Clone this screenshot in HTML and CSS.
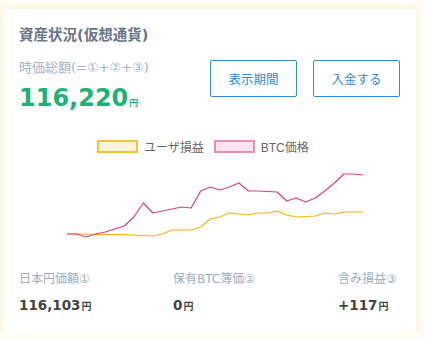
FILE: index.html
```html
<!DOCTYPE html>
<html lang="ja">
<head>
<meta charset="utf-8">
<link rel="stylesheet" href="styles.css">
</head>
<body>
<div class="card">
  <div class="header">
    <div class="summary">
      <div class="title">資産状況(仮想通貨)</div>
      <div class="label">時価総額(=①+②+③)</div>
      <div class="total">116,220<span class="yen">円</span></div>
    </div>
    <div class="actions">
      <button class="btn">表示期間</button>
      <button class="btn">入金する</button>
    </div>
  </div>
  <div class="legend">
    <span class="box box-yellow"></span><span class="legend-text">ユーザ損益</span>
    <span class="box box-pink"></span><span class="legend-text">BTC価格</span>
  </div>
  <svg class="chart" width="381" height="80" viewBox="0 0 381 80">
    <polyline fill="none" stroke="#f5b40f" stroke-width="1.2" stroke-linejoin="round"
      points="48,69 57.5,69 67.1,69 76.6,69.5 86.2,69.5 95.7,69.5 105.3,69.5 114.8,70 124.4,70.5 133.9,71 143.5,69 153,65 162.6,65 172.1,65 181.7,62 191.2,54 200.8,52 210.3,48 219.9,49 229.4,50 239,48 248.5,48 258.1,46 267.6,50 277.2,52 286.7,51.5 296.3,51 305.8,48 315.4,49 324.9,47 334.5,47 344,47"/>
    <polyline fill="none" stroke="#de3f79" stroke-width="1.2" stroke-linejoin="round"
      points="48,69 57.5,69 67.1,72 76.6,69 86.2,67 95.7,64 105.3,61 114.8,52 124.4,38 133.9,48 143.5,46 153,44 162.6,42 172.1,43 181.7,26 191.2,22 200.8,25 210.3,22 219.9,18 229.4,26 239,26 248.5,26.5 258.1,27 267.6,36 277.2,33 286.7,37 296.3,33 305.8,26 315.4,18 324.9,9 334.5,9 344,10"/>
  </svg>
  <div class="stats">
    <div class="stat">
      <div class="stat-label">日本円価額①</div>
      <div class="stat-value">116,103<span class="yen-s">円</span></div>
    </div>
    <div class="stat">
      <div class="stat-label">保有BTC簿価②</div>
      <div class="stat-value">0<span class="yen-s">円</span></div>
    </div>
    <div class="stat">
      <div class="stat-label">含み損益③</div>
      <div class="stat-value">+117<span class="yen-s">円</span></div>
    </div>
  </div>
</div>
</body>
</html>
```

FILE: styles.css
```css
html, body {
  margin: 0;
  background: #fffdf8;
}
body {
  padding: 9px 9px 0 3px;
  font-family: "DejaVu Sans", "Noto Sans CJK JP", sans-serif;
}
.card {
  width: 413px;
  height: 322px;
  box-sizing: border-box;
  background: #fff;
  border-radius: 4px;
  box-shadow: 0 0 6px 2px rgba(255, 228, 160, 0.45);
  padding: 16px 16px 0 16px;
}
.header {
  display: flex;
  justify-content: space-between;
}
.title {
  font-size: 14.5px;
  line-height: 20px;
  font-weight: bold;
  color: #6a7487;
}
.label {
  margin-top: 13px;
  font-size: 13px;
  line-height: 20px;
  color: #a6b2c4;
}
.total {
  margin-top: 5px;
  font-size: 24px;
  line-height: 30px;
  font-weight: bold;
  color: #1bb474;
}
.yen {
  font-family: "Noto Sans CJK JP", sans-serif;
  font-size: 9px;
  line-height: 10px;
  font-weight: bold;
  margin-left: 1px;
}
.actions {
  display: flex;
  gap: 16px;
  margin-top: 35px;
  align-self: flex-start;
}
.btn {
  width: 87px;
  height: 37px;
  background: #fff;
  border: 1px solid #2c8ce4;
  border-radius: 2px;
  color: #2c8ce4;
  font-family: "Noto Sans CJK JP", sans-serif;
  font-size: 12.5px;
  padding: 0;
}
.legend {
  display: flex;
  align-items: center;
  margin-top: 26px;
  padding-left: 78px;
  height: 15px;
}
.box {
  width: 41px;
  height: 13px;
  box-sizing: border-box;
  border: 2px solid;
}
.box-yellow {
  background: #fff5dd;
  border-color: #f8c13c;
}
.box-pink {
  background: #fde4ef;
  border-color: #ec8db3;
}
.legend-text {
  margin-left: 6px;
  margin-right: 10px;
  font-family: "Liberation Sans", "Noto Sans CJK JP", sans-serif;
  font-size: 12px;
  color: #666;
}
.chart {
  display: block;
  margin-top: 11px;
}
.stats {
  display: grid;
  grid-template-columns: 154px 165px auto;
  margin-top: 25px;
}
.stat-label {
  font-size: 12px;
  line-height: 18px;
  color: #9eacc2;
}
.stat-value {
  margin-top: 7px;
  font-size: 13.5px;
  line-height: 20px;
  font-weight: bold;
  color: #444;
}
.yen-s {
  font-family: "Noto Sans CJK JP", sans-serif;
  font-size: 10px;
  line-height: 10px;
  font-weight: bold;
  margin-left: 1px;
}
```
